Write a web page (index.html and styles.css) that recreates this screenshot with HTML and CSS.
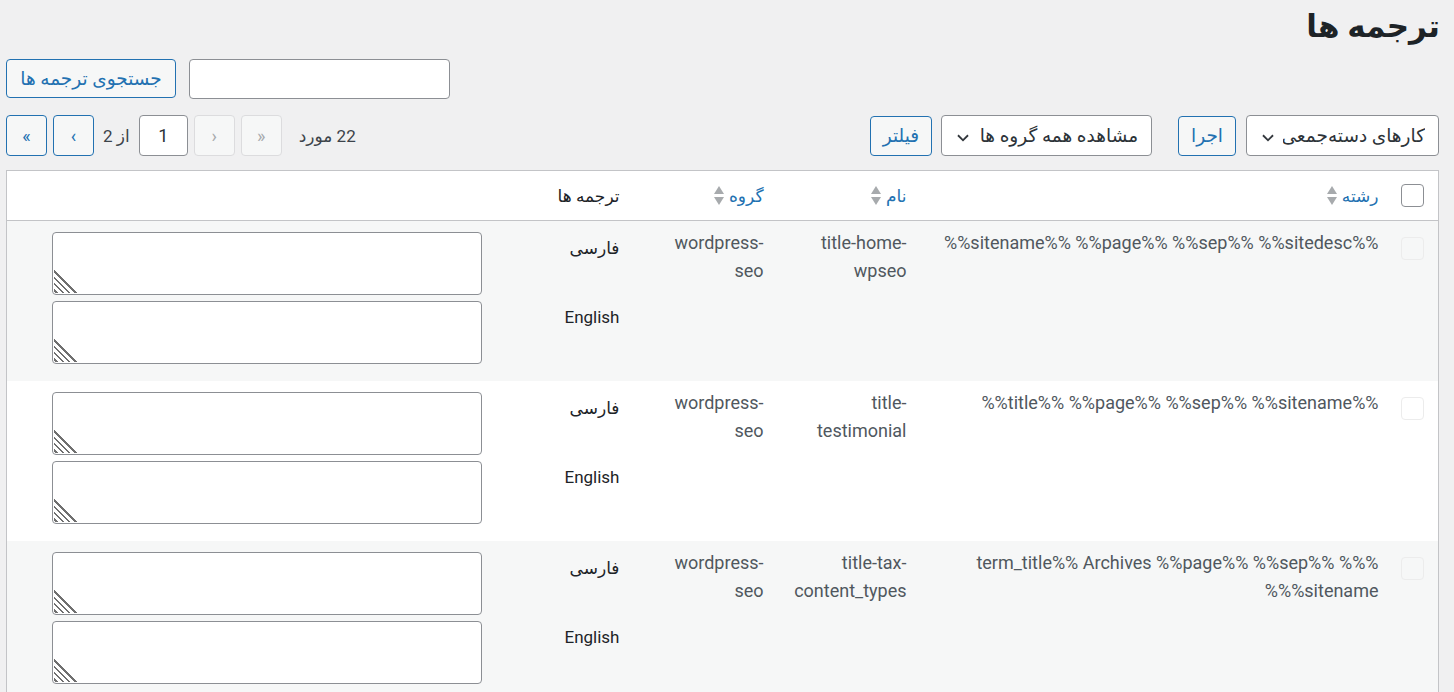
FILE: index.html
```html
<!DOCTYPE html>
<html lang="fa" dir="rtl">
<head>
<meta charset="utf-8">
<title>ترجمه ها</title>
<link rel="stylesheet" href="styles.css">
</head>
<body>
<div class="wrap">
  <h1 class="page-title">ترجمه ها</h1>

  <form class="strings-form">
    <div class="search-box">
      <input type="search" class="search-input">
      <button type="button" class="button">جستجوی ترجمه ها</button>
    </div>

    <div class="tablenav">
      <div class="actions">
        <select class="select select-bulk"><option>کارهای دسته‌جمعی</option></select>
        <button type="button" class="button">اجرا</button>
        <select class="select select-group"><option>مشاهده همه گروه ها</option></select>
        <button type="button" class="button">فیلتر</button>
      </div>
      <div class="pagination">
        <span class="displaying-num">22 مورد</span>
        <span class="page-btn is-disabled">«</span>
        <span class="page-btn is-disabled">‹</span>
        <input type="text" class="page-input" value="1">
        <span class="page-total">از 2</span>
        <a class="page-btn" href="#">›</a>
        <a class="page-btn" href="#">»</a>
      </div>
    </div>

    <table class="strings-table">
      <colgroup>
        <col class="w-cb">
        <col class="w-string">
        <col class="w-name">
        <col class="w-group">
        <col>
      </colgroup>
      <thead>
        <tr>
          <th class="cell-cb"><span class="checkbox"></span></th>
          <th class="sortable"><a href="#">رشته<span class="sort-ind"><i class="up"></i><i class="down"></i></span></a></th>
          <th class="sortable"><a href="#">نام<span class="sort-ind"><i class="up"></i><i class="down"></i></span></a></th>
          <th class="sortable cell-group"><a href="#">گروه<span class="sort-ind"><i class="up"></i><i class="down"></i></span></a></th>
          <th class="cell-translations">ترجمه ها</th>
        </tr>
      </thead>
      <tbody>
        <tr class="alternate">
          <td class="cell-cb"><span class="checkbox is-faint"></span></td>
          <td class="cell-string">%%sitename%% %%page%% %%sep%% %%sitedesc%%</td>
          <td class="cell-name">title-home-wpseo</td>
          <td class="cell-group">wordpress-seo</td>
          <td class="cell-translations">
            <div class="translation"><label>فارسی</label><span class="field"><textarea></textarea></span></div>
            <div class="translation"><label>English</label><span class="field"><textarea></textarea></span></div>
          </td>
        </tr>
        <tr>
          <td class="cell-cb"><span class="checkbox is-faint"></span></td>
          <td class="cell-string">%%title%% %%page%% %%sep%% %%sitename%%</td>
          <td class="cell-name">title-testimonial</td>
          <td class="cell-group">wordpress-seo</td>
          <td class="cell-translations">
            <div class="translation"><label>فارسی</label><span class="field"><textarea></textarea></span></div>
            <div class="translation"><label>English</label><span class="field"><textarea></textarea></span></div>
          </td>
        </tr>
        <tr class="alternate">
          <td class="cell-cb"><span class="checkbox is-faint"></span></td>
          <td class="cell-string">%%term_title%% Archives %%page%% %%sep%% %<wbr>%sitename%%</td>
          <td class="cell-name">title-tax-content_types</td>
          <td class="cell-group">wordpress-seo</td>
          <td class="cell-translations">
            <div class="translation"><label>فارسی</label><span class="field"><textarea></textarea></span></div>
            <div class="translation"><label>English</label><span class="field"><textarea></textarea></span></div>
          </td>
        </tr>
      </tbody>
    </table>
  </form>
</div>
</body>
</html>
```

FILE: styles.css
```css
* {
  box-sizing: border-box;
}

html,
body {
  margin: 0;
  background: #f0f0f1;
}

body {
  font-family: Roboto, "DejaVu Sans", sans-serif;
  font-size: 18px;
  color: #3c434a;
  overflow: hidden;
}

.wrap {
  padding: 6px 15px 0 6px;
}

.page-title {
  margin: 0 -1px 0 0;
  font-size: 31px;
  line-height: 42px;
  font-weight: 600;
  color: #1d2327;
}

/* search */
.search-box {
  display: flex;
  justify-content: flex-end;
  gap: 13px;
  margin-top: 11px;
}

.search-input {
  width: 261px;
  height: 40px;
  border: 1px solid #8c8f94;
  border-radius: 4px;
  background: #fff;
  font: inherit;
}

.button {
  height: 40px;
  padding: 0 12px;
  border: 1px solid #2271b1;
  border-radius: 4px;
  background: #f6f7f7;
  color: #2271b1;
  font: inherit;
  font-size: 18.5px;
  line-height: 38px;
  cursor: pointer;
}

.search-box .button {
  width: 170px;
  height: 39px;
  padding: 0;
}

/* table navigation */
.tablenav {
  display: flex;
  justify-content: space-between;
  align-items: center;
  margin-top: 16px;
  height: 41px;
}

.actions {
  display: flex;
  align-items: center;
}

.select {
  appearance: none;
  -webkit-appearance: none;
  height: 41px;
  padding: 0 13px 0 36px;
  border: 1px solid #8c8f94;
  border-radius: 4px;
  background: #fff url("data:image/svg+xml;charset=utf-8,%3Csvg xmlns='http://www.w3.org/2000/svg' width='20' height='20' viewBox='0 0 20 20'%3E%3Cpath d='M4.5 7l5.5 5.5 5.5-5.5 1.6 1.6-7.1 7.1-7.1-7.1z' fill='%2332373c'/%3E%3C/svg%3E") no-repeat left 13px top 56%;
  background-size: 16px 16px;
  color: #2c3338;
  font: inherit;
  font-size: 18.5px;
}

.select-bulk {
  width: 193px;
}

.select-group {
  width: 211px;
  margin-right: 26px;
}

.actions .button {
  margin-right: 10px;
}

.actions .button:last-child {
  margin-right: 9px;
}

.pagination {
  display: flex;
  align-items: center;
  gap: 6px;
}

.displaying-num {
  margin-left: 11px;
  font-size: 17px;
  color: #3c434a;
}

.page-btn {
  display: flex;
  align-items: center;
  justify-content: center;
  width: 41px;
  height: 41px;
  border: 1px solid #2271b1;
  border-radius: 4px;
  background: #f6f7f7;
  color: #2271b1;
  font-size: 18px;
  text-decoration: none;
}

.page-btn.is-disabled {
  border-color: #dcdcde;
  color: #a7aaad;
}

.page-input {
  width: 49px;
  height: 41px;
  border: 1px solid #8c8f94;
  border-radius: 4px;
  background: #fff;
  text-align: center;
  font: inherit;
  font-size: 18px;
  color: #2c3338;
}

.page-total {
  padding: 0 3px;
  font-size: 17px;
}

/* strings table */
.strings-table {
  width: 100%;
  margin-top: 14px;
  border: 1px solid #c3c4c7;
  border-collapse: collapse;
  table-layout: fixed;
  background: #fff;
}

.w-cb {
  width: 50px;
}

.w-string {
  width: 472px;
}

.w-name {
  width: 143px;
}

.w-group {
  width: 144px;
}

.strings-table th {
  height: 50px;
  padding: 0 10px;
  border-bottom: 1px solid #c3c4c7;
  text-align: right;
  font-weight: 400;
  font-size: 17px;
  color: #1d2327;
}

.strings-table th a {
  display: inline-flex;
  align-items: center;
  gap: 5px;
  color: #2271b1;
  text-decoration: none;
}

.sort-ind {
  display: inline-flex;
  flex-direction: column;
  gap: 3px;
}

.sort-ind i {
  width: 0;
  height: 0;
  border-left: 5px solid transparent;
  border-right: 5px solid transparent;
}

.sort-ind .up {
  border-bottom: 8px solid #a7aaad;
}

.sort-ind .down {
  border-top: 8px solid #a7aaad;
}

.strings-table td {
  vertical-align: top;
  padding: 8px 10px 14px;
  line-height: 28px;
  color: #50575e;
}

.strings-table tr.alternate td {
  background: #f6f7f7;
}

.cell-cb {
  padding-right: 14px !important;
}

.checkbox {
  display: block;
  width: 23px;
  height: 23px;
  border: 1px solid #8c8f94;
  border-radius: 4px;
  background: #fff;
}

.checkbox.is-faint {
  margin-top: 8px;
  border-color: #ececec;
  background: transparent;
}

td.cell-name {
  padding-left: 14px;
}

td.cell-group {
  padding-left: 24px;
}

.translation {
  display: flex;
  align-items: flex-start;
  gap: 10px;
  padding: 3px 0;
}

.translation label {
  flex: 0 0 128px;
  padding-top: 2px;
  font-size: 17px;
  color: #1d2327;
}

.field {
  position: relative;
  display: block;
  width: 430px;
  height: 63px;
}

.field textarea {
  display: block;
  width: 100%;
  height: 100%;
  border: 1px solid #8c8f94;
  border-radius: 4px;
  background: #fff;
  font: inherit;
  resize: none;
}

/* hatched grip in the corner of each textarea */
.field::after {
  content: "";
  position: absolute;
  left: 2px;
  bottom: 2px;
  width: 26px;
  height: 26px;
  background: linear-gradient(45deg,
    transparent 0 1.4px,
    #6f6f6f 1.4px 3.2px,
    transparent 3.2px 5.8px,
    #6f6f6f 5.8px 7.6px,
    transparent 7.6px 10.2px,
    #6f6f6f 10.2px 12px,
    transparent 12px 14.6px,
    #6f6f6f 14.6px 16.4px,
    transparent 16.4px);
  pointer-events: none;
}
```
